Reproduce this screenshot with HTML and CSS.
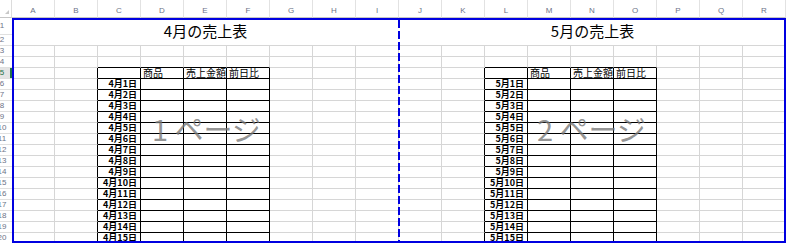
FILE: index.html
```html
<!DOCTYPE html>
<html lang="ja">
<head>
    <meta charset="UTF-8">
    <meta name="viewport" content="width=device-width, initial-scale=1.0">
    <title>売上表 改ページプレビュー</title>
    <link rel="stylesheet" href="styles.css">
</head>
<body>
    <div class="wrap">
        <div id="sheet" class="sheet"></div>

        <div class="pages">
            <div class="page page-1"><span class="watermark">1 ページ</span></div>
            <div class="page page-2"><span class="watermark">2 ページ</span></div>
        </div>
    </div>

    <script>
        const cols = 'ABCDEFGHIJKLMNOPQR'.split('');
        const heads = ['商品', '売上金額', '前日比'];
        // col = index of the date column (C and L)
        const tables = [{ month: 4, col: 2 }, { month: 5, col: 11 }];
        const sheet = document.getElementById('sheet');

        function addCell(cls, text) {
            const div = document.createElement('div');
            div.className = 'cell ' + cls;
            if (text) div.innerHTML = '<span>' + text + '</span>';
            sheet.appendChild(div);
        }

        function cellInfo(r, c) {
            let cls = '';
            let text = '';
            tables.forEach(t => {
                const k = c - t.col;
                if (r >= 5 && k >= 0 && k <= 3) cls = 'bd';
                if (r >= 5 && k === -1) cls = 'bl';
                if (r === 4 && k >= 0 && k <= 3) cls = 'bt';
                if (r === 5 && k >= 1 && k <= 3) { text = heads[k - 1]; cls += ' head'; }
                if (r >= 6 && k === 0) { text = t.month + '月' + (r - 5) + '日'; cls += ' date'; }
            });
            return { cls, text };
        }

        // column headers
        addCell('corner');
        cols.forEach(c => addCell('colhead', c));

        for (let r = 1; r <= 20; r++) {
            addCell('rowhead' + (r === 5 ? ' active' : ''), String(r));
            if (r === 1) {
                addCell('title', tables[0].month + '月の売上表');
                addCell('title', tables[1].month + '月の売上表');
                continue;
            }
            if (r === 2) continue;
            cols.forEach((c, i) => {
                const info = cellInfo(r, i);
                addCell(info.cls, info.text);
            });
        }
    </script>
</body>
</html>
```

FILE: styles.css
```css
body {
    margin: 0;
    background-color: #fff;
    font-family: "Noto Sans CJK JP", sans-serif;
}
.wrap {
    display: grid;
    width: 787px;
    height: 243px;
    overflow: hidden;
}
.sheet,
.pages {
    grid-area: 1 / 1;
    display: grid;
    grid-template-columns: 12px repeat(18, 43px);
    grid-template-rows: 18px 17px 11px repeat(18, 11px);
}
.cell {
    box-sizing: border-box;
    display: flex;
    align-items: flex-end;
    border-right: 1px solid #d6d6d6;
    border-bottom: 1px solid #d6d6d6;
    font-size: 9px;
    line-height: 10px;
    white-space: nowrap;
    color: #000;
}
.corner {
    align-items: flex-end;
    justify-content: flex-end;
    padding: 0 2px 3px 0;
    border-right: 1px solid #dcdcdc;
    border-bottom: 1px solid #c6c6c6;
}
.corner::after {
    content: "";
    width: 0;
    height: 0;
    border-left: 4px solid transparent;
    border-bottom: 4px solid #c8c8c8;
}
.colhead {
    align-items: center;
    justify-content: center;
    padding-top: 4px;
    border-right: 1px solid #e2e2e2;
    border-bottom: 1px solid #c6c6c6;
    font-family: "Liberation Sans", sans-serif;
    font-size: 8px;
    color: #6d7488;
}
.rowhead {
    overflow: hidden;
    align-items: center;
    border-right: none;
    border-bottom: 1px solid #e0e0e0;
    font-family: "Liberation Sans", sans-serif;
    font-size: 8px;
    color: #6d7488;
}
.rowhead span {
    flex: none;
    width: 24px;
    margin-left: -10px;
    text-align: center;
}
.rowhead.active {
    background-color: #e4e4e4;
    color: #217346;
    box-shadow: inset -2px 0 #217346;
}
.title {
    grid-column: span 9;
    grid-row: span 2;
    align-items: flex-start;
    justify-content: center;
    padding-top: 5px;
    border-right: none;
    font-size: 15px;
    line-height: 15px;
}
.bd {
    border-right-color: #000;
    border-bottom-color: #000;
}
.bl {
    border-right-color: #000;
}
.bt {
    border-bottom-color: #000;
}
.head {
    padding-left: 2px;
    font-size: 10px;
}
.date {
    justify-content: flex-end;
    padding-right: 3px;
    font-weight: bold;
}
.pages {
    pointer-events: none;
}
.page {
    grid-row: 2 / -1;
    margin-bottom: 1px;
    display: flex;
    align-items: center;
    justify-content: center;
    border: 2px solid #0000e0;
}
.page-1 {
    grid-column: 2 / 11;
    border-right: none;
    position: relative;
}
.page-1::after {
    content: "";
    position: absolute;
    top: 0;
    bottom: 0;
    right: -1px;
    width: 2px;
    background: repeating-linear-gradient(to bottom, #0000e0 0 8px, transparent 8px 11px);
}
.page-2 {
    grid-column: 11 / 20;
    border-left: none;
}
.watermark {
    margin-bottom: 6px;
    font-size: 29px;
    color: rgba(120, 120, 120, 0.8);
    white-space: pre;
}
```
